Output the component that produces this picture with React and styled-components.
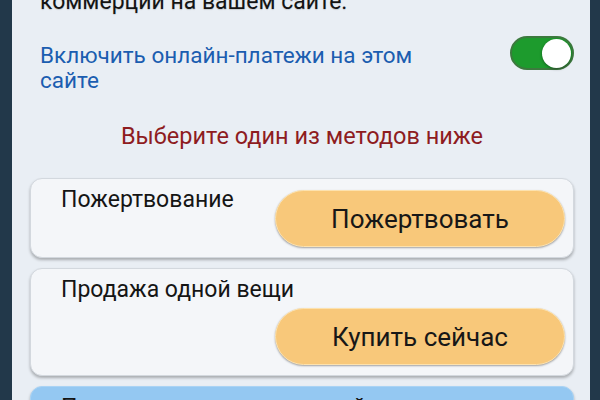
import React from 'react';
import styled, { createGlobalStyle } from 'styled-components';

const GlobalStyle = createGlobalStyle`
  html, body {
    margin: 0;
    padding: 0;
    background: #22384a;
    font-family: Roboto, "Noto Sans", "Liberation Sans", sans-serif;
  }
`;

const Viewport = styled.div`
  height: 400px;
  overflow: hidden;
  padding: 0 10px 0 12px;
`;

const Panel = styled.div`
  background: #e9eef4;
  min-height: 420px;
  margin-top: -12px;
  padding: 0 16px 0 18px;
`;

const Intro = styled.p`
  margin: 0;
  padding-left: 10px;
  font-size: 23px;
  line-height: 28px;
  color: #141414;
  text-shadow: 0 1px 1px rgba(0, 0, 0, 0.15);
`;

const ToggleRow = styled.div`
  display: flex;
  align-items: flex-start;
  justify-content: space-between;
  margin-top: 20px;
`;

const ToggleLabel = styled.div`
  max-width: 400px;
  margin-top: 7px;
  padding-left: 10px;
  font-size: 22.5px;
  line-height: 25px;
  color: #1b5db0;
`;

const Switch = styled.div`
  box-sizing: border-box;
  width: 64px;
  height: 34px;
  border-radius: 17px;
  background: #1d9b2d;
  border: 2px solid #3c7a3e;
  display: flex;
  align-items: center;
  justify-content: ${(p) => (p.on ? 'flex-end' : 'flex-start')};
  padding: 0 1px;
`;

const Knob = styled.div`
  width: 29px;
  height: 29px;
  border-radius: 50%;
  background: #ffffff;
  box-shadow: 0 1px 3px rgba(0, 0, 0, 0.4);
`;

const Heading = styled.h2`
  margin: 29px 0 0;
  text-align: center;
  font-size: 23.5px;
  line-height: 28px;
  font-weight: 400;
  color: #8e1c1f;
`;

const MethodList = styled.div`
  display: flex;
  flex-direction: column;
  gap: 10px;
  margin-top: 28px;
`;

const Card = styled.div`
  display: flex;
  flex-wrap: wrap;
  justify-content: space-between;
  align-items: flex-start;
  row-gap: 1px;
  padding: ${(p) => p.pad || '7px 8px 10px 30px'};
  border-radius: 12px;
  background: ${(p) => p.bg || '#f4f6f9'};
  border: 1px solid ${(p) => p.edge || '#d3d8de'};
  box-shadow: 0 2px 3px rgba(0, 0, 0, 0.28);
`;

const CardTitle = styled.div`
  font-size: 23px;
  line-height: 27px;
  color: #151515;
`;

const ActionButton = styled.button`
  margin: 4px 0 0 auto;
  width: 290px;
  height: 57px;
  border-radius: 29px;
  background: #f8c87a;
  border: 1px solid #fde2ae;
  box-shadow: 0 1px 2px rgba(0, 0, 0, 0.35);
  font-family: inherit;
  font-size: 26px;
  color: #171717;
  cursor: pointer;
`;

const methods = [
  { title: 'Пожертвование', action: 'Пожертвовать' },
  { title: 'Продажа одной вещи', action: 'Купить сейчас' },
];

export default function App() {
  return (
    <>
      <GlobalStyle />
      <Viewport>
        <Panel>
          <Intro>коммерции на вашем сайте.</Intro>
          <ToggleRow>
            <ToggleLabel>Включить онлайн-платежи на этом сайте</ToggleLabel>
            <Switch on>
              <Knob />
            </Switch>
          </ToggleRow>
          <Heading>Выберите один из методов ниже</Heading>
          <MethodList>
            {methods.map((m) => (
              <Card key={m.title}>
                <CardTitle>{m.title}</CardTitle>
                <ActionButton>{m.action}</ActionButton>
              </Card>
            ))}
            <Card bg="#94c8f2" edge="#a9d3f5" pad="7px 8px 10px 30px">
              <CardTitle>Продажа нескольких вещей</CardTitle>
            </Card>
          </MethodList>
        </Panel>
      </Viewport>
    </>
  );
}
